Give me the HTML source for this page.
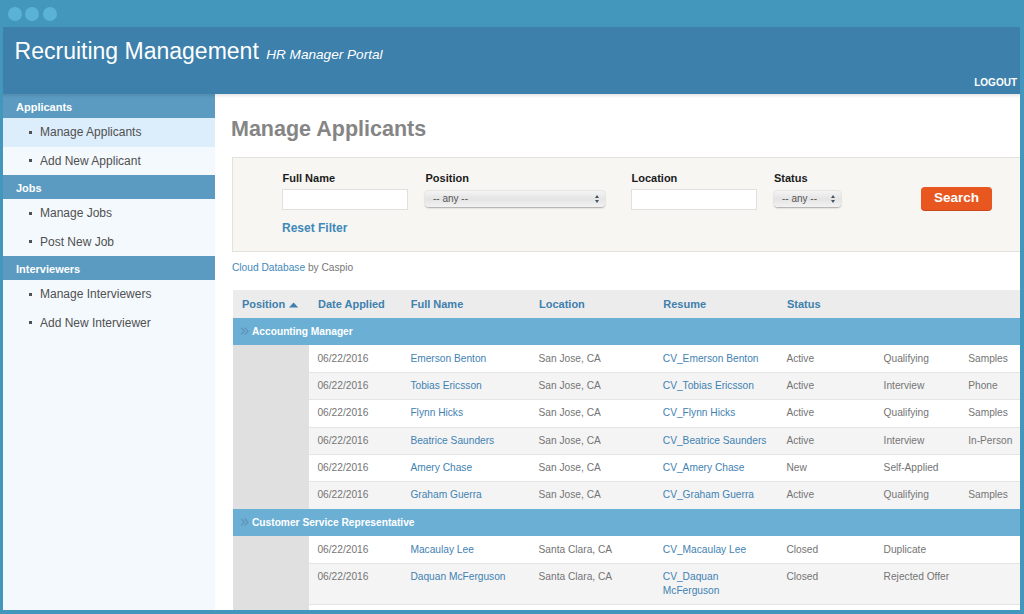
<!DOCTYPE html>
<html><head><meta charset="utf-8">
<style>
*{box-sizing:border-box;margin:0;padding:0}
html,body{width:1024px;height:614px;overflow:hidden;background:#4397bd;font-family:"Liberation Sans",sans-serif}
.abs{position:absolute}
.dot{position:absolute;top:6.7px;width:14px;height:14px;border-radius:50%;background:#5ab3d7}
#hdr{position:absolute;left:3px;top:27px;width:1017px;height:67px;background:#3c80ab}
#title{position:absolute;left:11.6px;top:9.5px;font-size:23px;color:#fff;white-space:nowrap;line-height:28px}
#title i{font-size:13.6px;margin-left:7.4px}
#logout{position:absolute;right:3px;top:49.5px;font-size:10px;font-weight:bold;color:#fff;line-height:12px}
#side{position:absolute;left:3px;top:94px;width:212px;height:516px;background:#f4f9fe}
.sh{height:24.3px;background:#5b9bc1;color:#fff;font-weight:bold;font-size:11px;padding-left:13px;line-height:27px}
.si{height:28.35px;position:relative;font-size:12px;color:#505050;line-height:28.6px;padding-left:37px}
.si:before{content:"";position:absolute;left:25.8px;top:12.3px;width:3.2px;height:3.2px;background:#505050}
.si.act{background:#dcedfb}
#main{position:absolute;left:215px;top:94px;width:805px;height:516px;background:#fff;overflow:hidden}
#shadow{position:absolute;left:3px;top:94px;width:1017px;height:4px;background:linear-gradient(rgba(0,0,0,.10),rgba(0,0,0,0));z-index:5}

.t{position:absolute;white-space:nowrap;line-height:1}
#h1{left:231px;top:118.6px;font-size:21.5px;font-weight:bold;color:#858585}
#filter{position:absolute;left:232px;top:157px;width:800px;height:95px;background:#f7f6f3;border:1px solid #e3e1dc}
.lbl{font-size:11px;font-weight:bold;color:#1b1b1b;top:172.7px}
.inp{position:absolute;top:189.3px;height:20.6px;background:#fff;border:1px solid #e2e0dc}
.sel{position:absolute;top:191px;height:15.6px;border-radius:4px;background:linear-gradient(#f4f4f4,#e4e4e4 50%,#f2f2f2);box-shadow:0 0.3px 1.6px rgba(0,0,0,.32);font-size:10px;color:#555;line-height:16px;padding-left:8px}
.sel:after{content:"";position:absolute;right:6px;top:4px;width:0;height:0;border-left:2.2px solid transparent;border-right:2.2px solid transparent;border-bottom:3.3px solid #3f5566}
.sel:before{content:"";position:absolute;right:6px;top:9px;width:0;height:0;border-left:2.2px solid transparent;border-right:2.2px solid transparent;border-top:3.3px solid #3f5566}
#reset{left:282px;top:221.8px;font-size:12px;font-weight:bold;color:#3f88b9}
#search{position:absolute;left:921px;top:187.4px;width:71px;height:23px;border-radius:4px;background:#e8571f;box-shadow:0 1px 0 #c9461a;color:#fff;font-size:13.5px;font-weight:bold;text-align:center;line-height:21.5px}
#cloud{left:232px;top:263.3px;font-size:10.2px;color:#777}
#cloud span{color:#3f88b9}
#tbl{position:absolute;left:232.5px;top:290px;width:800px}
#thead{position:absolute;left:232.5px;top:290px;width:800px;height:28px;background:#ececec}
.th{font-size:11px;font-weight:bold;color:#3e80ae;top:298.5px}
.grp{position:absolute;left:232.5px;width:800px;background:#6bafd5}
.gl{font-size:10.2px;font-weight:bold;color:#fff}
.chev{font-size:10.2px;font-weight:bold;color:#4f8db3}
.gcol{position:absolute;left:232.5px;width:76.4px;background:#e0e0e0}
.row{position:absolute;left:308.9px;width:720px;border-top:1px solid #e4e4e4}
.row.w{background:#fff}
.row.g{background:#f4f4f4}
.d{font-size:10.2px;color:#747474}
.a{font-size:10.2px;color:#3f82b3}
</style></head><body>
<div class="dot" style="left:8.2px"></div>
<div class="dot" style="left:25.4px"></div>
<div class="dot" style="left:42.6px"></div>
<div id="hdr">
  <div id="title">Recruiting Management<i>HR Manager Portal</i></div>
  <div id="logout">LOGOUT</div>
</div>
<div id="side">
  <div class="sh">Applicants</div>
  <div class="si act">Manage Applicants</div>
  <div class="si">Add New Applicant</div>
  <div class="sh">Jobs</div>
  <div class="si">Manage Jobs</div>
  <div class="si">Post New Job</div>
  <div class="sh">Interviewers</div>
  <div class="si">Manage Interviewers</div>
  <div class="si">Add New Interviewer</div>
</div>
<div id="main"></div>
<div class="t" id="h1">Manage Applicants</div>
<div id="filter"></div>
<div class="t lbl" style="left:282.5px">Full Name</div>
<div class="inp" style="left:282.3px;width:125.4px"></div>
<div class="t lbl" style="left:425.5px">Position</div>
<div class="sel" style="left:425px;width:180px">-- any --</div>
<div class="t lbl" style="left:631.5px">Location</div>
<div class="inp" style="left:631.2px;width:125.4px"></div>
<div class="t lbl" style="left:774px">Status</div>
<div class="sel" style="left:774px;width:67px">-- any --</div>
<div class="t" id="reset">Reset Filter</div>
<div id="search">Search</div>
<div class="t" id="cloud"><span>Cloud Database</span> by Caspio</div>
<div id="thead"></div>
<div class="t th" style="left:241.9px">Position</div>
<div class="t th" style="left:318px">Date Applied</div>
<div class="t th" style="left:410.7px">Full Name</div>
<div class="t th" style="left:539px">Location</div>
<div class="t th" style="left:663.3px">Resume</div>
<div class="t th" style="left:786.9px">Status</div>
<svg class="abs" style="left:289px;top:302px" width="10" height="6"><path d="M0 5.5 L4.6 0.5 L9.2 5.5 Z" fill="#3e80ae"/></svg>
<div class="grp" style="top:317.7px;height:27.0px"></div>
<svg class="abs" style="left:240.2px;top:327.20px" width="10" height="9"><path d="M1.2 0.8 L4.4 4.2 L1.2 7.6 M4.8 0.8 L8 4.2 L4.8 7.6" fill="none" stroke="#6193b9" stroke-width="1.3"/></svg>
<div class="t gl" style="left:252px;top:327.30px">Accounting Manager</div>
<div class="gcol" style="top:344.7px;height:163.98px"></div>
<div class="row w" style="top:344.70px;height:27.33px;border-top:none;"></div>
<div class="t d" style="left:317.4px;top:353.70px;">06/22/2016</div>
<div class="t a" style="left:410.4px;top:353.70px;">Emerson Benton</div>
<div class="t d" style="left:538.5px;top:353.70px;">San Jose, CA</div>
<div class="t a" style="left:662.8px;top:353.70px;">CV_Emerson Benton</div>
<div class="t d" style="left:786.4px;top:353.70px;">Active</div>
<div class="t d" style="left:883.6px;top:353.70px;">Qualifying</div>
<div class="t d" style="left:968.2px;top:353.70px;">Samples</div>
<div class="row g" style="top:372.03px;height:27.33px;"></div>
<div class="t d" style="left:317.4px;top:381.03px;">06/22/2016</div>
<div class="t a" style="left:410.4px;top:381.03px;">Tobias Ericsson</div>
<div class="t d" style="left:538.5px;top:381.03px;">San Jose, CA</div>
<div class="t a" style="left:662.8px;top:381.03px;">CV_Tobias Ericsson</div>
<div class="t d" style="left:786.4px;top:381.03px;">Active</div>
<div class="t d" style="left:883.6px;top:381.03px;">Interview</div>
<div class="t d" style="left:968.2px;top:381.03px;">Phone</div>
<div class="row w" style="top:399.36px;height:27.33px;"></div>
<div class="t d" style="left:317.4px;top:408.36px;">06/22/2016</div>
<div class="t a" style="left:410.4px;top:408.36px;">Flynn Hicks</div>
<div class="t d" style="left:538.5px;top:408.36px;">San Jose, CA</div>
<div class="t a" style="left:662.8px;top:408.36px;">CV_Flynn Hicks</div>
<div class="t d" style="left:786.4px;top:408.36px;">Active</div>
<div class="t d" style="left:883.6px;top:408.36px;">Qualifying</div>
<div class="t d" style="left:968.2px;top:408.36px;">Samples</div>
<div class="row g" style="top:426.69px;height:27.33px;"></div>
<div class="t d" style="left:317.4px;top:435.69px;">06/22/2016</div>
<div class="t a" style="left:410.4px;top:435.69px;">Beatrice Saunders</div>
<div class="t d" style="left:538.5px;top:435.69px;">San Jose, CA</div>
<div class="t a" style="left:662.8px;top:435.69px;">CV_Beatrice Saunders</div>
<div class="t d" style="left:786.4px;top:435.69px;">Active</div>
<div class="t d" style="left:883.6px;top:435.69px;">Interview</div>
<div class="t d" style="left:968.2px;top:435.69px;">In-Person</div>
<div class="row w" style="top:454.02px;height:27.33px;"></div>
<div class="t d" style="left:317.4px;top:463.02px;">06/22/2016</div>
<div class="t a" style="left:410.4px;top:463.02px;">Amery Chase</div>
<div class="t d" style="left:538.5px;top:463.02px;">San Jose, CA</div>
<div class="t a" style="left:662.8px;top:463.02px;">CV_Amery Chase</div>
<div class="t d" style="left:786.4px;top:463.02px;">New</div>
<div class="t d" style="left:883.6px;top:463.02px;">Self-Applied</div>
<div class="row g" style="top:481.35px;height:27.33px;"></div>
<div class="t d" style="left:317.4px;top:490.35px;">06/22/2016</div>
<div class="t a" style="left:410.4px;top:490.35px;">Graham Guerra</div>
<div class="t d" style="left:538.5px;top:490.35px;">San Jose, CA</div>
<div class="t a" style="left:662.8px;top:490.35px;">CV_Graham Guerra</div>
<div class="t d" style="left:786.4px;top:490.35px;">Active</div>
<div class="t d" style="left:883.6px;top:490.35px;">Qualifying</div>
<div class="t d" style="left:968.2px;top:490.35px;">Samples</div>
<div class="grp" style="top:508.68px;height:27.4px"></div>
<svg class="abs" style="left:240.2px;top:518.18px" width="10" height="9"><path d="M1.2 0.8 L4.4 4.2 L1.2 7.6 M4.8 0.8 L8 4.2 L4.8 7.6" fill="none" stroke="#6193b9" stroke-width="1.3"/></svg>
<div class="t gl" style="left:252px;top:518.28px">Customer Service Representative</div>
<div class="gcol" style="top:536.08px;height:80px"></div>
<div class="row w" style="top:536.08px;height:27.00px;border-top:none;"></div>
<div class="t d" style="left:317.4px;top:545.08px;">06/22/2016</div>
<div class="t a" style="left:410.4px;top:545.08px;">Macaulay Lee</div>
<div class="t d" style="left:538.5px;top:545.08px;">Santa Clara, CA</div>
<div class="t a" style="left:662.8px;top:545.08px;">CV_Macaulay Lee</div>
<div class="t d" style="left:786.4px;top:545.08px;">Closed</div>
<div class="t d" style="left:883.6px;top:545.08px;">Duplicate</div>
<div class="row g" style="top:563.08px;height:41.30px;"></div>
<div class="t d" style="left:317.4px;top:572.08px;">06/22/2016</div>
<div class="t a" style="left:410.4px;top:572.08px;">Daquan McFerguson</div>
<div class="t d" style="left:538.5px;top:572.08px;">Santa Clara, CA</div>
<div class="t a" style="left:662.8px;top:572.08px;line-height:14px;margin-top:-2px;">CV_Daquan<br>McFerguson</div>
<div class="t d" style="left:786.4px;top:572.08px;">Closed</div>
<div class="t d" style="left:883.6px;top:572.08px;">Rejected Offer</div>
<div class="row w" style="top:604.38px;height:20px"></div>
<div id="shadow"></div>
<div class="abs" style="left:1020px;top:0;width:4px;height:614px;background:#4397bd"></div>
<div class="abs" style="left:0;top:610px;width:1024px;height:4px;background:#4397bd"></div>
</body></html>
